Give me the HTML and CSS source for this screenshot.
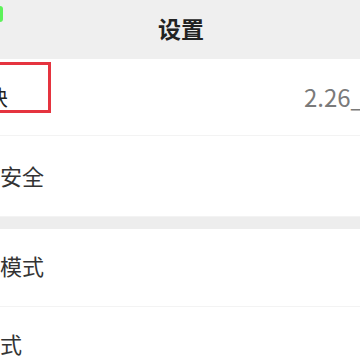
FILE: index.html
```html
<!DOCTYPE html>
<html lang="zh-CN">
<head>
    <meta charset="UTF-8">
    <meta name="viewport" content="width=device-width, initial-scale=1.0">
    <title>设置</title>
    <link rel="stylesheet" href="styles.css">
</head>
<body>

<div class="screen">
    <div class="header">
        <span class="status-dot"></span>
        <h1>设置</h1>
    </div>

    <div class="group">
        <div class="row row-first">
            <span class="label label-version">插件模块</span>
            <span class="value">2.26_</span>
            <span class="highlight"></span>
        </div>
        <div class="row">
            <span class="label">账号与安全</span>
        </div>
    </div>

    <div class="group">
        <div class="row row-mode">
            <span class="label">简洁版模式</span>
        </div>
        <div class="row row-last">
            <span class="label">长辈版模式</span>
        </div>
    </div>
</div>

</body>
</html>
```

FILE: styles.css
```css
body {
    margin: 0;
    font-family: "Noto Sans CJK SC", "Noto Sans", sans-serif;
    background-color: #ededed;
    color: #333;
}
.screen {
    width: 360px;
    height: 360px;
    overflow: hidden;
}
.header {
    position: relative;
    height: 59px;
    display: flex;
    align-items: center;
    justify-content: center;
    background-color: #efefef;
}
.header h1 {
    margin: 0 0 4px 0;
    font-size: 23px;
    font-weight: 700;
    color: #222;
    padding-left: 2px;
}
/* petit bout vert du statut, coupé au bord */
.status-dot {
    position: absolute;
    left: -3px;
    top: 6px;
    width: 6px;
    height: 16px;
    border-radius: 3px;
    background-color: #5df25a;
}
.group {
    background-color: #fff;
    margin-bottom: 12px;
}
.row {
    position: relative;
    height: 80px;
    display: flex;
    align-items: center;
    justify-content: space-between;
    border-bottom: 1px solid #f3f3f3;
}
.row-first {
    height: 76px;
}
.row-mode {
    height: 77px;
}
.row-last {
    border-bottom: none;
}
.label {
    margin-left: -66px;
    font-size: 22px;
    color: #333;
    white-space: nowrap;
}
.label-version {
    margin-left: -76px;
    font-size: 21px;
    color: #222;
}
.label, .value {
    line-height: 1;
}
.row .label {
    padding-bottom: 2px;
}
.row-mode .label {
    padding-bottom: 6px;
}
.row-last .label {
    margin-left: -88px;
    padding-bottom: 8px;
}
.value {
    font-size: 24px;
    color: #7a7a7a;
    margin-right: -4px;
    white-space: nowrap;
}
.highlight {
    position: absolute;
    left: -10px;
    top: 3px;
    width: 55px;
    height: 45px;
    border: 3px solid #e5343f;
}
```
